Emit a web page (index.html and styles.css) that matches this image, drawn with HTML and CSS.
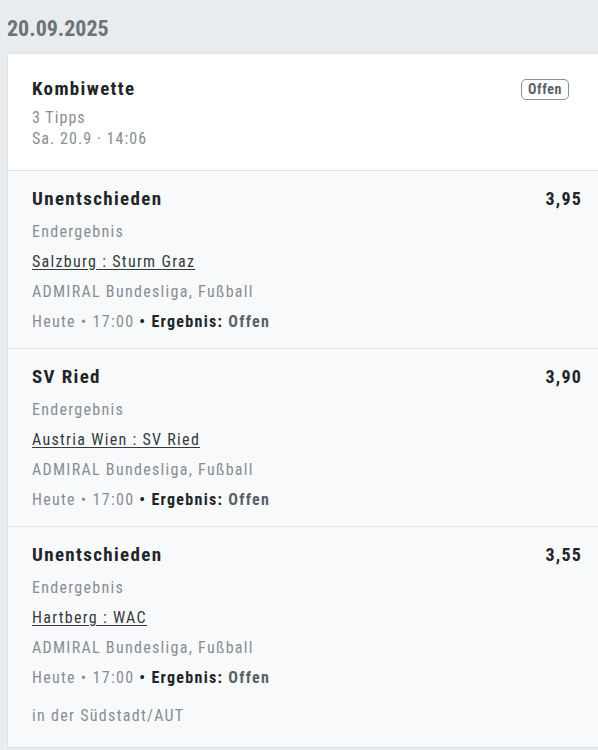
FILE: index.html
```html
<!DOCTYPE html>
<html lang="de">
<head>
<meta charset="utf-8">
<link rel="stylesheet" href="styles.css">
</head>
<body>
<div class="page">
  <h2 class="date">20.09.2025</h2>
  <div class="card">
    <div class="summary">
      <div class="summary-main">
        <div class="title">Kombiwette</div>
        <div class="meta">3 Tipps</div>
        <div class="meta">Sa. 20.9 · 14:06</div>
      </div>
      <span class="badge">Offen</span>
    </div>

    <div class="tip">
      <div class="tip-head"><span class="title">Unentschieden</span><span class="odds">3,95</span></div>
      <div class="line">Endergebnis</div>
      <div class="line"><a class="match" href="#">Salzburg : Sturm Graz</a></div>
      <div class="line">ADMIRAL Bundesliga, Fußball</div>
      <div class="line">Heute • 17:00 <b class="res">• Ergebnis: <span class="res-val">Offen</span></b></div>
    </div>

    <div class="tip">
      <div class="tip-head"><span class="title">SV Ried</span><span class="odds">3,90</span></div>
      <div class="line">Endergebnis</div>
      <div class="line"><a class="match" href="#">Austria Wien : SV Ried</a></div>
      <div class="line">ADMIRAL Bundesliga, Fußball</div>
      <div class="line">Heute • 17:00 <b class="res">• Ergebnis: <span class="res-val">Offen</span></b></div>
    </div>

    <div class="tip tip-last">
      <div class="tip-head"><span class="title">Unentschieden</span><span class="odds">3,55</span></div>
      <div class="line">Endergebnis</div>
      <div class="line"><a class="match" href="#">Hartberg : WAC</a></div>
      <div class="line">ADMIRAL Bundesliga, Fußball</div>
      <div class="line">Heute • 17:00 <b class="res">• Ergebnis: <span class="res-val">Offen</span></b></div>
      <div class="line venue">in der Südstadt/AUT</div>
    </div>
  </div>
</div>
</body>
</html>
```
FILE: styles.css
```css
* { box-sizing: border-box; }
html, body { margin: 0; padding: 0; }
body {
  background: #e9ecef;
  font-family: "Roboto Condensed", "Roboto", sans-serif;
  color: #212529;
  overflow: hidden;
}
.page { padding: 0 0 0 7px; }
.date {
  margin: 0;
  height: 53px;
  line-height: 58px;
  font-size: 22px;
  font-weight: 700;
  color: #6c737a;
}
.card {
  background: #f8f9fa;
  border: 1px solid #dee2e6;
  border-right: 0;
}
.summary {
  background: #fff;
  display: flex;
  justify-content: space-between;
  align-items: flex-start;
  padding: 23px 29px 21px 24px;
}
.title {
  font-size: 19px;
  font-weight: 700;
  line-height: 24px;
  letter-spacing: 1.35px;
  color: #212529;
}
.meta {
  font-size: 16px;
  line-height: 21px;
  color: #868e96;
  letter-spacing: 1.05px;
}
.summary-main .title { margin-bottom: 6px; }
.badge {
  margin-top: 2px;
  border: 1px solid #868e96;
  border-radius: 5px;
  font-size: 14px;
  font-weight: 700;
  line-height: 19px;
  padding: 0 6px;
  color: #5a6169;
  letter-spacing: 0.6px;
}
.tip {
  border-top: 1px solid #dee2e6;
  padding: 16px 16px 11px 24px;
}
.tip-last { padding-bottom: 16px; }
.tip-head {
  display: flex;
  justify-content: space-between;
  align-items: center;
  margin-bottom: 6px;
}
.odds {
  font-size: 18px;
  font-weight: 700;
  line-height: 24px;
  color: #212529;
  letter-spacing: 1.2px;
}
.line {
  font-size: 16px;
  line-height: 30px;
  color: #868e96;
  letter-spacing: 1.3px;
}
.match {
  color: #343a40;
  text-decoration: underline;
  text-underline-offset: 2px;
}
.res { color: #212529; font-weight: 700; }
.res-val { color: #5a6169; }
.venue { margin-top: 8px; }
```
